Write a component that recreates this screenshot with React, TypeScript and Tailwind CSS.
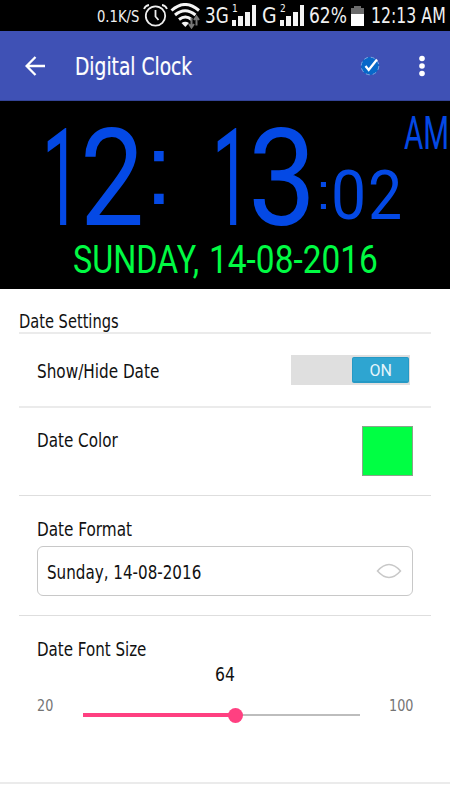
import { useLayoutEffect, useRef, useState } from 'react';
import type { ReactNode } from 'react';
import clsx from 'clsx';

interface FitTextProps {
  width: number;
  className?: string;
  children: ReactNode;
}

// Condenses a run of text horizontally until it is exactly `width` wide
const FitText = ({ width, className, children }: FitTextProps) => {
  const ref = useRef<HTMLSpanElement>(null);
  const [scale, setScale] = useState(1);

  useLayoutEffect(() => {
    if (ref.current) setScale(width / ref.current.offsetWidth);
  }, [width, children]);

  return (
    <span className={clsx('block shrink-0 whitespace-nowrap', className)} style={{ width }}>
      <span ref={ref} className="inline-block origin-left" style={{ transform: `scaleX(${scale})` }}>
        {children}
      </span>
    </span>
  );
};

const SignalBars = ({ sim }: { sim: string }) => (
  <div className="relative h-[22px] w-6 shrink-0">
    <span className="absolute -top-px left-0 text-[10px] leading-[10px]">{sim}</span>
    <svg className="block" width="24" height="22" fill="#f4f4f4">
      <rect x="0" y="15" width="4" height="6" />
      <rect x="6" y="11" width="5" height="10" />
      <rect x="13" y="7" width="5" height="14" />
      <rect x="20" y="0" width="4" height="21" />
    </svg>
  </div>
);

const StatusBar = () => (
  <div className="flex h-[31px] items-center bg-black pl-[97px] text-[21px] leading-[31px] text-[#f0f0f0]">
    <FitText width={42} className="pt-px text-[16px]">0.1K/S</FitText>
    <svg className="ml-1 shrink-0" width="26" height="24" viewBox="0 0 26 24" fill="none" stroke="#eee" strokeWidth="1.8">
      <circle cx="12.5" cy="12" r="9.7" />
      <path d="M12.5 6v6.5l3 3.5M1 5Q2.5 1.5 6 1M19 1q3.5 .5 5 4" />
    </svg>
    <svg className="ml-px shrink-0" width="32" height="26" viewBox="0 0 32 26" fill="none" stroke="#f4f4f4" strokeWidth="3">
      <path d="M1.5 7.5Q15 -4.5 29 7.5M5 12q10 -8.5 20.5 0M9 16.5q6.5 -5 12.5 0" />
      <path d="M11.5 20q3.8 -2.5 7.5 0l-3.7 4z" fill="#f4f4f4" stroke="none" />
      <path d="M21.5 15v9M19 21l2.5 3.5 2.5-3.5M26.5 22.5v-8M24 17l2.5-3.5 2.5 3.5" stroke="#777" strokeWidth="2" />
    </svg>
    <FitText width={24} className="ml-[3px] pt-0.5">3G</FitText>
    <div className="ml-[3px]"><SignalBars sim="1" /></div>
    <FitText width={15} className="ml-[6px] pt-0.5">G</FitText>
    <div className="ml-[3px]"><SignalBars sim="2" /></div>
    <FitText width={38} className="ml-[5px] pt-0.5">62%</FitText>
    <svg className="ml-[4px] shrink-0" width="13" height="20">
      <path d="M3 0h7v2h3v7H0V2h3z" fill="#6b6b6b" />
      <rect y="8" width="13" height="12" fill="#fff" />
    </svg>
    <FitText width={75} className="ml-[7px] pt-0.5">12:13 AM</FitText>
  </div>
);

const AppBar = () => (
  <header className="flex h-[70px] items-center border-b border-[#344497] bg-[#3f51b5] pl-[25px] text-white">
    <svg width="20" height="20" viewBox="0 0 20 20" fill="none" stroke="white" strokeWidth="2.3">
      <path d="M20 10H2M10.5 1L1.6 10l8.9 9" />
    </svg>
    <FitText width={117} className="ml-[30px] pt-[3px] text-[25px]">
      <span className="[-webkit-text-stroke:0.2px_white]">Digital Clock</span>
    </FitText>
    <svg className="ml-auto" width="20" height="20" viewBox="0 0 20 20">
      <circle cx="10" cy="10" r="9" fill="#0868c9" />
      <circle cx="10" cy="10" r="8.8" fill="none" stroke="#7fa6e0" strokeWidth="1" strokeDasharray="4 3" />
      <path d="M5.5 10l3.2 4L17 3.5" fill="none" stroke="white" strokeWidth="2.3" />
    </svg>
    <svg className="ml-[39px] mr-[25px]" width="6" height="22" fill="white">
      <circle cx="3" cy="3.5" r="2.8" />
      <circle cx="3" cy="11" r="2.8" />
      <circle cx="3" cy="18.5" r="2.8" />
    </svg>
  </header>
);

const ClockPreview = () => (
  <section className="h-[188px] bg-black pt-[29px] font-[Roboto]">
    <div className="flex h-[97px] text-[136px] leading-[97px] text-[#0449e5]">
      <FitText width={38} className="ml-[42px]">1</FitText>
      <FitText width={64}>2</FitText>
      <FitText width={28} className="-mt-[9px] ml-px font-['Liberation_Sans'] text-[100px]">:</FitText>
      <FitText width={38} className="ml-[39px]">1</FitText>
      <FitText width={68} className="-ml-0.5">3</FitText>
      <div className="flex pt-[39px] text-[68px] leading-[54px]">
        <FitText width={15} className="-mt-[4px] font-['Liberation_Sans'] text-[50px]">:</FitText>
        <FitText width={35}>0</FitText>
        <FitText width={34} className="ml-[2px]">2</FitText>
      </div>
      <FitText width={45} className="-mt-[14px] ml-[2px] text-[46px] leading-[35px]">AM</FitText>
    </div>
    <div className="mt-[19px] flex text-[39px] leading-[29px] text-[#00fb43]">
      <FitText width={126} className="ml-[73px]">SUNDAY,</FitText>
      <FitText width={169} className="ml-[10px]">14-08-2016</FitText>
    </div>
  </section>
);

const DateToggle = () => (
  <div className="flex h-[30px] w-[119px] justify-end bg-[#dfdfdf] p-0.5 pr-px">
    <div className="flex h-[26px] w-[57px] justify-center rounded-[2px] border border-b-2 border-[#2599c5] bg-[#2ea5d1] text-[16px] leading-[26px] text-[#e5f5fb]">
      <FitText width={22} className="font-[Roboto]">ON</FitText>
    </div>
  </div>
);

const FontSizeSlider = ({ value, min, max }: { value: number; min: number; max: number }) => (
  <div className="flex text-[16px] leading-[18px] text-[#747474]">
    <FitText width={16}>{min}</FitText>
    <div className="relative ml-[30px] mt-[10px] flex h-4 w-[277px] items-center">
      <div className="h-[2px] w-full bg-[#bdbdbd]" />
      <div className="absolute left-0 h-1 bg-[#ff4081]" style={{ width: `${((value - min) / (max - min)) * 100}%` }} />
      <div className="absolute left-[145px] h-[15px] w-[15px] rounded-full bg-[#ff4081]" />
    </div>
    <FitText width={24} className="ml-[29px]">{max}</FitText>
  </div>
);

export default function App() {
  return (
    <div className="h-[800px] w-[450px] overflow-hidden bg-white font-['DejaVu_Sans_Condensed','DejaVu_Sans',sans-serif] text-[20px] leading-6 text-[#111]">
      <StatusBar />
      <AppBar />
      <ClockPreview />
      <main className="mx-[19px] pt-5">
        <h2 className="h-[25px] border-b-2 border-[#ebebeb]">
          <FitText width={100}>Date Settings</FitText>
        </h2>
        <div className="flex h-[74px] items-start justify-between border-b-2 border-[#ebebeb] pl-[18px] pr-[21px] pt-[21px]">
          <FitText width={122} className="pt-[4px]">Show/Hide Date</FitText>
          <DateToggle />
        </div>
        <div className="flex h-[88px] items-start justify-between border-b border-[#dedede] pl-[18px] pr-[18px] pt-[18px]">
          <FitText width={81} className="pt-[2px]">Date Color</FitText>
          <div className="h-[50px] w-[51px] border border-[#8aa48a] bg-[#00ff43]" />
        </div>
        <div className="h-[120px] border-b border-[#dedede] pl-[18px] pr-[18px] pt-[21px]">
          <FitText width={95}>Date Format</FitText>
          <div className="mt-[5px] flex h-[50px] items-center justify-between rounded-[6px] border border-[#c8c8c8] pl-[9px] pr-[10px]">
            <FitText width={154} className="pt-0.5">Sunday, 14-08-2016</FitText>
            <svg width="26" height="16" viewBox="0 0 26 16" fill="none" stroke="#c8c8c8" strokeWidth="1.5">
              <path d="M1.5 8Q13 -5 24.5 8Q13 21 1.5 8z" />
            </svg>
          </div>
        </div>
        <div className="h-[166px] pl-[18px] pt-[21px]">
          <FitText width={109}>Date Font Size</FitText>
          <FitText width={20} className="ml-[178px] mt-px">64</FitText>
          <div className="mt-[11px]">
            <FontSizeSlider value={64} min={20} max={100} />
          </div>
        </div>
      </main>
      <div className="h-0.5 bg-[#ebebeb]" />
    </div>
  );
}
